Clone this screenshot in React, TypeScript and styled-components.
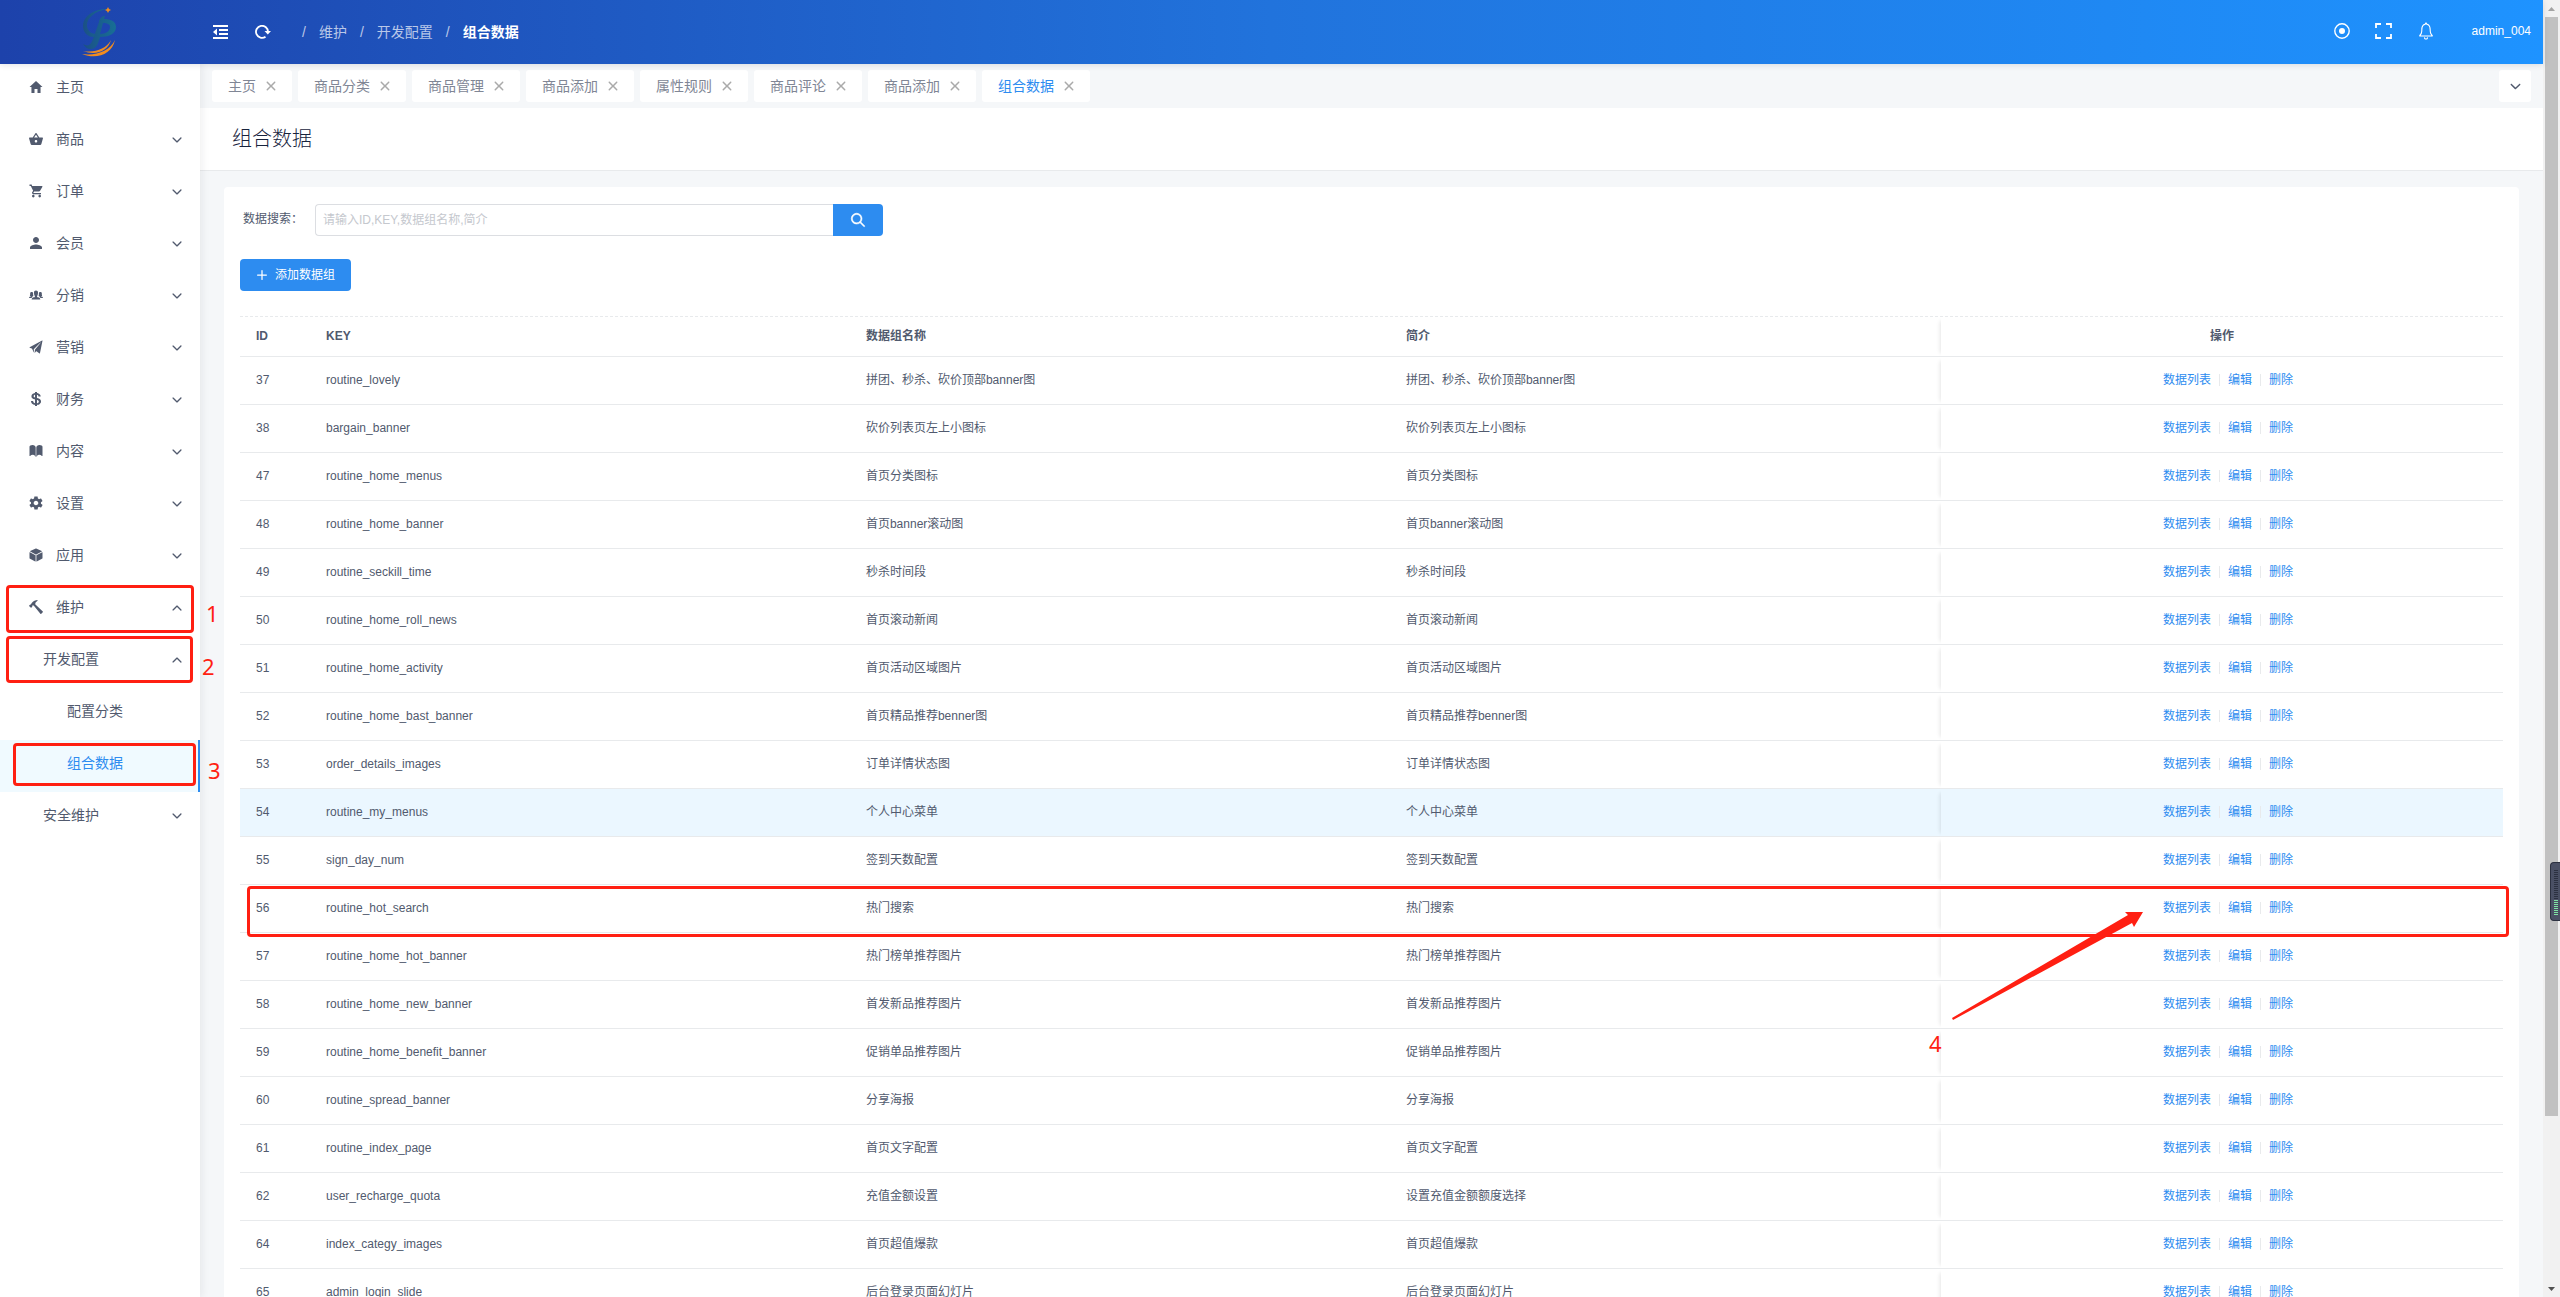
import React from 'react';
import styled, { createGlobalStyle, css } from 'styled-components';
import {
  IoMdHome, IoMdBasket, IoMdCart, IoMdPerson, IoIosPeople, IoIosPaperPlane, IoLogoUsd,
  IoIosBook, IoMdSettings, IoIosCube, IoMdHammer, IoIosArrowDown, IoIosArrowUp, IoIosClose,
  IoIosSearch, IoIosAdd, IoIosNotificationsOutline,
} from 'react-icons/io';

const blue = '#2d8cf0';
const red = '#ff1f12';
const ink = '#515a6e';
const line = '#e8eaec';

const GlobalStyle = createGlobalStyle`
  *, *::before, *::after { box-sizing: border-box; }
  body {
    margin: 0;
    background: #f5f7f9;
    color: ${ink};
    font: 12px/18px "Liberation Sans", "Noto Sans CJK SC", sans-serif;
  }
  button, input { font: inherit; color: inherit; }
  button { border: 0; padding: 0; background: none; cursor: pointer; }
  a { color: inherit; text-decoration: none; }
  svg { flex-shrink: 0; }
  h1, ul, nav { margin: 0; padding: 0; }
`;

const Screen = styled.div`
  display: grid;
  grid-template-columns: minmax(0, 1fr) 17px;
  height: 100vh;
  overflow: hidden;
`;

const Layout = styled.div`
  display: grid;
  grid-template: 64px minmax(0, 1fr) / 200px minmax(0, 1fr);
  min-height: 0;
`;

const Header = styled.header`
  grid-column: 1 / -1;
  z-index: 3;
  display: flex;
  align-items: center;
  background: linear-gradient(90deg, #1d42ab, #2173dc 50%, #1e93ff);
  box-shadow: 0 1px 6px rgba(0, 21, 41, 0.12);
  color: #fff;
`;

const Brand = styled.a`
  display: flex;
  justify-content: center;
  width: 200px;
`;

const HeaderTools = styled.div`
  display: flex;
  gap: 26px;
  padding-left: 13px;
`;

const IconButton = styled.button`
  display: flex;
  align-items: center;
  justify-content: center;
  width: 16px;
  height: 20px;
  color: #fff;
`;

const Crumbs = styled.nav`
  display: flex;
  gap: 13px;
  margin-left: 31px;
  font-size: 14px;
  line-height: 20px;
  color: rgba(255, 255, 255, 0.7);

  strong { color: #fff; }
`;

const HeaderRight = styled.div`
  display: flex;
  align-items: center;
  gap: 26px;
  margin-left: auto;
  padding: 0 12px 2px 0;
`;

const UserLink = styled.a`
  margin-left: 12px;
`;

const Sider = styled.aside`
  z-index: 2;
  background: #fff;
  box-shadow: 2px 0 8px rgba(29, 35, 41, 0.07);
`;

const MenuRow = styled.a<{ $level: 1 | 2 | 3; $active?: boolean }>`
  position: relative;
  display: flex;
  align-items: center;
  height: 52px;
  padding: 0 16px 6px ${p => ({ 1: 28, 2: 43, 3: 67 })[p.$level]}px;
  font-size: 14px;
  line-height: 20px;

  > svg:first-child { margin-right: 12px; }

  ${p => p.$active && css`
    background: #f0faff;
    color: ${blue};
    border-right: 2px solid ${blue};
  `}
`;

const MenuArrow = styled.span`
  display: flex;
  margin: 2px 0 0 auto;
`;

/* Tutorial marks lie over the page content. */
const MarkBox = styled.span<{ $inset: string }>`
  position: absolute;
  z-index: 1;
  inset: ${p => p.$inset};
  border: 3px solid ${red};
  border-radius: 4px;
  pointer-events: none;
`;

const MarkNumber = styled.span<{ $left: number; $top: number }>`
  position: absolute;
  z-index: 1;
  left: ${p => p.$left}px;
  top: ${p => p.$top}px;
  color: ${red};
  font: 22px/24px "Noto Sans", sans-serif;
`;

const MarkArrow = styled.svg`
  position: absolute;
  z-index: 1;
  left: 11px;
  top: 26px;
  pointer-events: none;
`;

const Main = styled.main`
  min-width: 0;
  overflow: hidden;
`;

const TabBar = styled.div`
  display: flex;
  gap: 6px;
  padding: 6px 12px;
`;

const Tab = styled.div<{ $active?: boolean }>`
  display: flex;
  align-items: center;
  gap: 3px;
  height: 32px;
  padding: 0 9px 0 16px;
  border-radius: 3px;
  background: #fff;
  font-size: 14px;
  line-height: 20px;
  color: ${p => (p.$active ? blue : '#808695')};

  button {
    display: flex;
    color: #aaa;
  }
`;

const TabMenu = styled.button`
  display: flex;
  align-items: center;
  justify-content: center;
  width: 32px;
  height: 32px;
  margin-left: auto;
  border-radius: 3px;
  background: #fff;
`;

const PageHeader = styled.div`
  padding: 17px 32px 17px;
  border-bottom: 1px solid ${line};
  background: #fff;

  h1 {
    font-size: 20px;
    line-height: 28px;
    font-weight: 300;
    color: #17233d;
  }
`;

const Card = styled.section`
  margin: 16px 24px;
  padding: 17px 16px 16px;
  border-radius: 4px;
  background: #fff;
`;

const SearchForm = styled.form`
  display: flex;
  height: 32px;

  label {
    width: 75px;
    padding: 6px 12px 0 0;
    text-align: right;
    white-space: nowrap;
  }

  input {
    width: 518px;
    padding: 0 7px;
    border: 1px solid #dcdee2;
    border-right: 0;
    border-radius: 4px 0 0 4px;
    background: #fff;
    outline: none;
  }

  input::placeholder { color: #c5c8ce; }

  button {
    display: flex;
    align-items: center;
    justify-content: center;
    width: 50px;
    border-radius: 0 4px 4px 0;
    background: ${blue};
    color: #fff;
  }
`;

const AddButton = styled.button`
  display: flex;
  align-items: center;
  gap: 3px;
  height: 32px;
  margin: 23px 0 25px;
  padding: 0 16px 0 12px;
  border-radius: 4px;
  background: ${blue};
  color: #fff;
`;

const Table = styled.table`
  width: 100%;
  table-layout: fixed;
  border-spacing: 0;
  border-top: 1px dashed ${line};

  th, td {
    height: 48px;
    padding: 0 16px 2px;
    border-bottom: 1px solid ${line};
    text-align: left;
  }

  th { height: 40px; }

  th:last-child, td:last-child {
    position: relative;
    box-shadow: -5px 0 4px -4px rgba(0, 0, 0, 0.1);
    text-align: center;
  }
`;

const Row = styled.tr<{ $hover?: boolean }>`
  position: relative;
  background: ${p => (p.$hover ? '#ebf7ff' : 'transparent')};
`;

const Actions = styled.div`
  display: flex;
  justify-content: center;
  align-items: center;
  padding-left: 12px;
  color: ${blue};

  a + a {
    display: flex;
    align-items: center;
    margin-left: 8px;
  }

  a + a::before {
    content: "";
    width: 1px;
    height: 12px;
    margin-right: 8px;
    background: ${line};
  }
`;

const ScrollTrack = styled.div`
  display: flex;
  flex-direction: column;
  justify-content: space-between;
  align-items: center;
  background: #f1f1f1;
`;

const ScrollEnd = styled.span<{ $down?: boolean }>`
  display: flex;
  align-items: center;
  height: 17px;
  color: ${p => (p.$down ? '#505050' : '#a3a3a3')};
`;

const ScrollRail = styled.div`
  flex: 1;
  width: 13px;

  &::before {
    content: "";
    display: block;
    height: 87%;
    background: #c1c1c1;
  }
`;

const Meter = styled.div`
  position: fixed;
  right: 0;
  top: 862px;
  z-index: 5;
  width: 10px;
  height: 59px;
  padding: 7px 2px 7px 3px;
  border: 1px solid #2c3140;
  border-right: 0;
  border-radius: 4px 0 0 4px;
  background: #4a5064;

  &::before, &::after {
    content: "";
    display: block;
    height: 30px;
    background: repeating-linear-gradient(#2c3140 0 1px, transparent 1px 2px);
  }

  &::after {
    height: 16px;
    background: repeating-linear-gradient(#7fe3a4 0 1px, transparent 1px 2px);
  }
`;

const Logo = () => (
  <svg width="36" height="50" viewBox="0 0 36 50" aria-label="logo">
    <defs>
      <linearGradient id="leaf" x1="0" y1="0" x2="1" y2="0">
        <stop offset="0" stopColor="#1b4f86" />
        <stop offset="1" stopColor="#176f95" />
      </linearGradient>
    </defs>
    <path fill="url(#leaf)" d="M25 2C12 2 1 9 1 19c0 6 4 11 11 11 3 0 5-1 6-3-7 1-13-2-13-9C5 11 13 4 25 2z" />
    <path fill="url(#leaf)" fillRule="evenodd" d="M17 14c1-3 3-5 6-5l-1 3c6 0 12 2 12 8 0 7-8 10-16 10-2 6-3 12-9 12-4 0-6-2-8-5 5 3 8 1 10-5l6-17zm4 2l-3 11c6 0 10-3 10-7 0-3-3-4-7-4z" />
    <g fill="#f08c20">
      <path d="M1 44c12 2 23-2 28-11-3 11-15 16-28 11z" />
      <path d="M0 47c14 2 28-3 33-14-3 14-18 20-33 14z" />
      <path d="M26 0l1 2 2 1-2 1-1 2-1-2-2-1 2-1z" />
    </g>
  </svg>
);

const FoldIcon = () => (
  <svg width="16" height="14" viewBox="0 0 16 14" fill="currentColor">
    <path d="M0 0h15v2H0zM6 4h9v2H6zM6 8h9v2H6zM0 12h15v2H0zM4 3.500v7L0 7z" />
  </svg>
);

const ReloadIcon = () => (
  <svg width="16" height="14" viewBox="0 0 16 14">
    <path d="M10.500 11.700A6 6 0 1 1 13 7" fill="none" stroke="currentColor" strokeWidth="1.800" />
    <path d="M9.500 6h6.500l-3.200 3.600z" fill="currentColor" />
  </svg>
);

const TargetIcon = () => (
  <svg width="16" height="16" viewBox="0 0 16 16">
    <circle cx="8" cy="8" r="7.200" fill="none" stroke="currentColor" strokeWidth="1.400" />
    <circle cx="8" cy="8" r="3" fill="currentColor" />
  </svg>
);

const ExpandIcon = () => (
  <svg width="17" height="16" viewBox="0 0 17 16" fill="none" stroke="currentColor" strokeWidth="1.800">
    <path d="M1 5V1h5M11 1h5v4M16 11v4h-5M6 15H1v-4" />
  </svg>
);

type MenuEntry = {
  label: string;
  level: 1 | 2 | 3;
  icon?: React.ComponentType<{ size?: number }>;
  arrow?: 'up' | 'down';
  active?: boolean;
  mark?: { inset: string; number: string; left: number; top: number };
};

const menu: MenuEntry[] = [
  { label: '主页', level: 1, icon: IoMdHome },
  { label: '商品', level: 1, icon: IoMdBasket, arrow: 'down' },
  { label: '订单', level: 1, icon: IoMdCart, arrow: 'down' },
  { label: '会员', level: 1, icon: IoMdPerson, arrow: 'down' },
  { label: '分销', level: 1, icon: IoIosPeople, arrow: 'down' },
  { label: '营销', level: 1, icon: IoIosPaperPlane, arrow: 'down' },
  { label: '财务', level: 1, icon: IoLogoUsd, arrow: 'down' },
  { label: '内容', level: 1, icon: IoIosBook, arrow: 'down' },
  { label: '设置', level: 1, icon: IoMdSettings, arrow: 'down' },
  { label: '应用', level: 1, icon: IoIosCube, arrow: 'down' },
  { label: '维护', level: 1, icon: IoMdHammer, arrow: 'up', mark: { inset: '1px 6px 3px 6px', number: '1', left: 206, top: 17 } },
  { label: '开发配置', level: 2, arrow: 'up', mark: { inset: '0 7px 5px 6px', number: '2', left: 202, top: 18 } },
  { label: '配置分类', level: 3 },
  { label: '组合数据', level: 3, active: true, mark: { inset: '3px 2px 6px 13px', number: '3', left: 208, top: 18 } },
  { label: '安全维护', level: 2, arrow: 'down' },
];

const tabs = ['主页', '商品分类', '商品管理', '商品添加', '属性规则', '商品评论', '商品添加', '组合数据'];

const rows: [number, string, string, string?][] = [
  [37, 'routine_lovely', '拼团、秒杀、砍价顶部banner图'],
  [38, 'bargain_banner', '砍价列表页左上小图标'],
  [47, 'routine_home_menus', '首页分类图标'],
  [48, 'routine_home_banner', '首页banner滚动图'],
  [49, 'routine_seckill_time', '秒杀时间段'],
  [50, 'routine_home_roll_news', '首页滚动新闻'],
  [51, 'routine_home_activity', '首页活动区域图片'],
  [52, 'routine_home_bast_banner', '首页精品推荐benner图'],
  [53, 'order_details_images', '订单详情状态图'],
  [54, 'routine_my_menus', '个人中心菜单'],
  [55, 'sign_day_num', '签到天数配置'],
  [56, 'routine_hot_search', '热门搜索'],
  [57, 'routine_home_hot_banner', '热门榜单推荐图片'],
  [58, 'routine_home_new_banner', '首发新品推荐图片'],
  [59, 'routine_home_benefit_banner', '促销单品推荐图片'],
  [60, 'routine_spread_banner', '分享海报'],
  [61, 'routine_index_page', '首页文字配置'],
  [62, 'user_recharge_quota', '充值金额设置', '设置充值金额额度选择'],
  [64, 'index_categy_images', '首页超值爆款'],
  [65, 'admin_login_slide', '后台登录页面幻灯片'],
];

const HOVERED_ID = 54;
const MARKED_ID = 56;

export default function App() {
  return (
    <Screen>
      <GlobalStyle />
      <Layout>
        <Header>
          <Brand href="#"><Logo /></Brand>
          <HeaderTools>
            <IconButton aria-label="收起菜单"><FoldIcon /></IconButton>
            <IconButton aria-label="刷新"><ReloadIcon /></IconButton>
          </HeaderTools>
          <Crumbs>
            <span>/</span><a href="#">维护</a>
            <span>/</span><a href="#">开发配置</a>
            <span>/</span><strong>组合数据</strong>
          </Crumbs>
          <HeaderRight>
            <IconButton aria-label="定位"><TargetIcon /></IconButton>
            <IconButton aria-label="全屏"><ExpandIcon /></IconButton>
            <IconButton aria-label="通知"><IoIosNotificationsOutline size={22} /></IconButton>
            <UserLink href="#">admin_004</UserLink>
          </HeaderRight>
        </Header>

        <Sider>
          <nav>
            {menu.map(({ label, level, icon: Icon, arrow, active, mark }) => (
              <MenuRow key={label} href="#" $level={level} $active={active}>
                {Icon && <Icon size={16} />}
                {label}
                {arrow && (
                  <MenuArrow>
                    {arrow === 'up' ? <IoIosArrowUp size={14} /> : <IoIosArrowDown size={14} />}
                  </MenuArrow>
                )}
                {mark && (
                  <>
                    <MarkBox $inset={mark.inset} />
                    <MarkNumber $left={mark.left} $top={mark.top}>{mark.number}</MarkNumber>
                  </>
                )}
              </MenuRow>
            ))}
          </nav>
        </Sider>

        <Main>
          <TabBar>
            {tabs.map((tab, i) => (
              <Tab key={i} $active={i === tabs.length - 1}>
                <span>{tab}</span>
                <button aria-label="关闭"><IoIosClose size={24} /></button>
              </Tab>
            ))}
            <TabMenu aria-label="更多标签"><IoIosArrowDown size={15} /></TabMenu>
          </TabBar>
          <PageHeader><h1>组合数据</h1></PageHeader>
          <Card>
            <SearchForm>
              <label htmlFor="search">数据搜索：</label>
              <input id="search" placeholder="请输入ID,KEY,数据组名称,简介" />
              <button type="button" aria-label="搜索"><IoIosSearch size={18} strokeWidth={16} stroke="currentColor" /></button>
            </SearchForm>
            <AddButton><IoIosAdd size={20} />添加数据组</AddButton>
            <Table>
              <colgroup>
                <col style={{ width: 70 }} />
                <col style={{ width: '23.86%' }} />
                <col style={{ width: '23.86%' }} />
                <col style={{ width: '24.35%' }} />
                <col />
              </colgroup>
              <thead>
                <tr>
                  <th>ID</th><th>KEY</th><th>数据组名称</th><th>简介</th><th>操作</th>
                </tr>
              </thead>
              <tbody>
                {rows.map(([id, key, name, intro]) => (
                  <Row key={id} $hover={id === HOVERED_ID}>
                    <td>
                      {id}
                      {id === MARKED_ID && <MarkBox $inset="1px -6px -4px 7px" />}
                    </td>
                    <td>{key}</td>
                    <td>{name}</td>
                    <td>{intro ?? name}</td>
                    <td>
                      <Actions>
                        <a href="#">数据列表</a><a href="#">编辑</a><a href="#">删除</a>
                      </Actions>
                      {id === MARKED_ID && (
                        <>
                          <MarkArrow width="192" height="110" viewBox="0 0 192 110">
                            <path fill={red} d="M0 107L176 4 173 1 191 1 182 16 180 12 1 109z" />
                          </MarkArrow>
                          <MarkNumber $left={-12} $top={146}>4</MarkNumber>
                        </>
                      )}
                    </td>
                  </Row>
                ))}
              </tbody>
            </Table>
          </Card>
        </Main>
      </Layout>

      <ScrollTrack>
        <ScrollEnd>
          <svg width="7" height="4" viewBox="0 0 7 4" fill="currentColor"><path d="M0 4L3.500 0 7 4z" /></svg>
        </ScrollEnd>
        <ScrollRail />
        <ScrollEnd $down>
          <svg width="7" height="4" viewBox="0 0 7 4" fill="currentColor"><path d="M0 0L3.500 4 7 0z" /></svg>
        </ScrollEnd>
      </ScrollTrack>
      <Meter />
    </Screen>
  );
}
